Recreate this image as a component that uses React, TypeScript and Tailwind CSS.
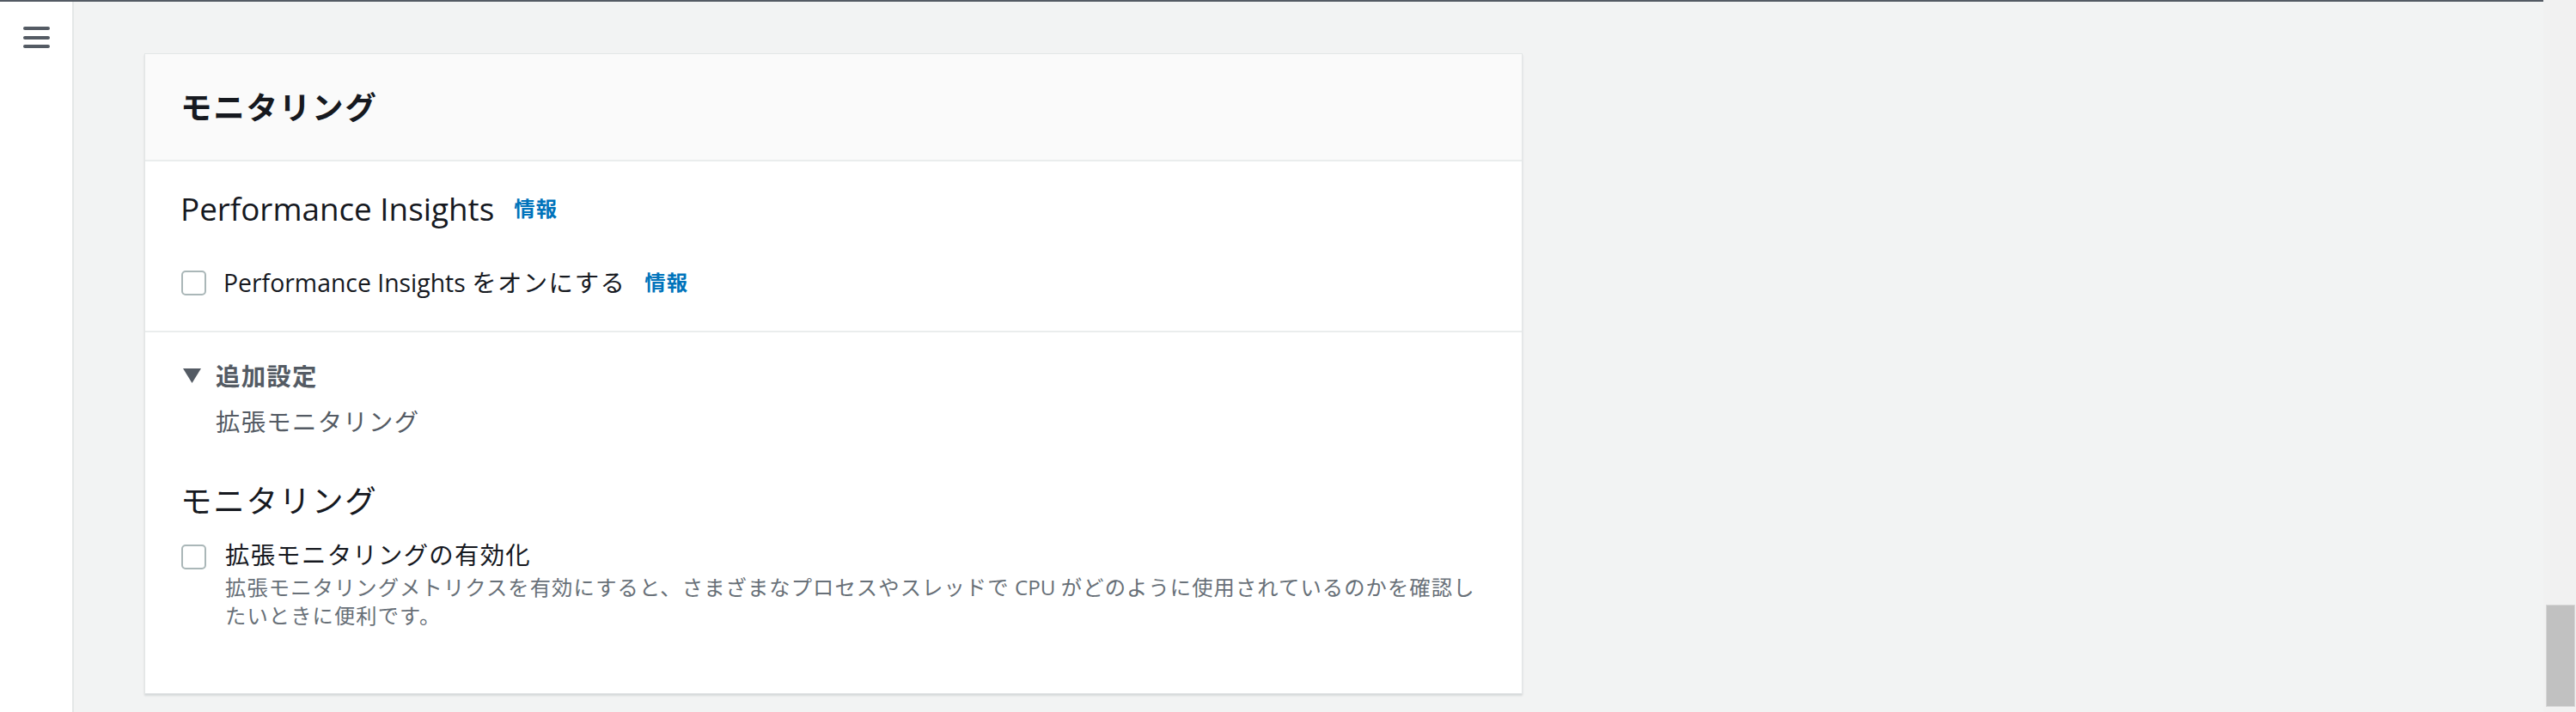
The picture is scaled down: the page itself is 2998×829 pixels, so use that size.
import React from "react";

function Checkbox({ className = "" }: { className?: string }) {
  return (
    <span
      className={
        "block h-[29px] w-[29px] shrink-0 rounded-[5px] border-2 border-[#aab7b8] bg-white " +
        className
      }
    />
  );
}

function Info() {
  return (
    <span className="text-[24.4px] font-bold leading-[32px] text-[#0073bb] tracking-[0.045em]">
      情報
    </span>
  );
}

export default function App() {
  return (
    <div className="flex h-[829px] w-full overflow-hidden bg-[#f2f3f3] font-['Open_Sans','Noto_Sans_CJK_JP',sans-serif]">
      <div className="flex min-w-0 flex-1 flex-col">
        <div className="h-[2px] shrink-0 bg-[#545b64]" />
        <div className="flex min-h-0 flex-1">
          <aside className="w-[86px] shrink-0 border-r-2 border-[#e4e7e7] bg-white pl-[27px] pt-[29px]">
            <svg width="32" height="26" viewBox="0 0 32 26" fill="#545b64">
              <rect x="0" y="0" width="31" height="4" rx="2" />
              <rect x="0" y="11" width="31" height="4" rx="2" />
              <rect x="0" y="21" width="31" height="4" rx="2" />
            </svg>
          </aside>
          <main className="min-w-0 flex-1 pl-[82px] pt-[60px]">
            <section className="w-[1604px] border border-[#e3e6e6] bg-white shadow-[0_2px_2px_0_rgba(0,28,36,0.12)]">
              <header className="flex h-[125px] items-center border-b-2 border-[#eaeded] bg-[#fafafa] px-[41px]">
                <h2 className="text-[36.6px] font-bold leading-[44px] tracking-[0.045em] text-[#16191f]">
                  モニタリング
                </h2>
              </header>

              <div className="border-b-2 border-[#eaeded] px-[41px] pb-[36px] pt-[31px]">
                <div className="flex h-[48px] items-center gap-[23px]">
                  <span className="text-[36.8px] leading-[48px] text-[#16191f]">
                    Performance Insights
                  </span>
                  <Info />
                </div>
                <div className="mt-[42px] flex h-[40px] items-center">
                  <Checkbox className="ml-[1px]" />
                  <span className="ml-[20px] text-[28.4px] leading-[40px] text-[#16191f]">
                    Performance Insights{" "}
                    <span className="tracking-[0.05em]">をオンにする</span>
                  </span>
                  <span className="ml-[22px] flex items-center">
                    <Info />
                  </span>
                </div>
              </div>

              <div className="px-[41px] pb-[74px] pt-[31px]">
                <div className="flex h-[40px] items-center">
                  <svg width="22" height="18" viewBox="0 0 22 18" className="ml-[3px] shrink-0">
                    <polygon points="0,0 21,0 10.5,17" fill="#545b64" />
                  </svg>
                  <span className="ml-[16px] text-[28.4px] font-bold leading-[40px] tracking-[0.045em] text-[#545b64]">
                    追加設定
                  </span>
                </div>
                <div className="mt-[13px] flex h-[40px] items-center pl-[41px]">
                  <span className="text-[28.4px] leading-[40px] tracking-[0.045em] text-[#545b64]">
                    拡張モニタリング
                  </span>
                </div>

                <div className="mt-[48px] flex h-[48px] items-center">
                  <h3 className="text-[36.6px] leading-[48px] tracking-[0.045em] text-[#16191f]">
                    モニタリング
                  </h3>
                </div>

                <div className="mt-[19px] flex items-start">
                  <Checkbox className="ml-[1px] mt-[8px]" />
                  <div className="ml-[22px] flex flex-col">
                    <div className="flex h-[40px] items-center">
                      <span className="text-[28.4px] leading-[40px] tracking-[0.045em] text-[#16191f]">
                        拡張モニタリングの有効化
                      </span>
                    </div>
                    <div className="mt-[1px] text-[24.3px] leading-[33px] text-[#687078]">
                      <div className="whitespace-nowrap">
                        <span className="tracking-[0.045em]">
                          拡張モニタリングメトリクスを有効にすると、さまざまなプロセスやスレッドで
                        </span>{" "}
                        CPU{" "}
                        <span className="tracking-[0.045em]">
                          がどのように使用されているのかを確認し
                        </span>
                      </div>
                      <div className="whitespace-nowrap tracking-[0.045em]">
                        たいときに便利です。
                      </div>
                    </div>
                  </div>
                </div>
              </div>
            </section>
          </main>
        </div>
      </div>
      <div className="flex w-[38px] shrink-0 flex-col justify-end bg-[#f1f1f1] pb-[6px] pl-[3px] pr-[1px]">
        <div className="h-[119px] border border-[#d6d6d6] bg-[#c1c1c1]" />
      </div>
    </div>
  );
}
